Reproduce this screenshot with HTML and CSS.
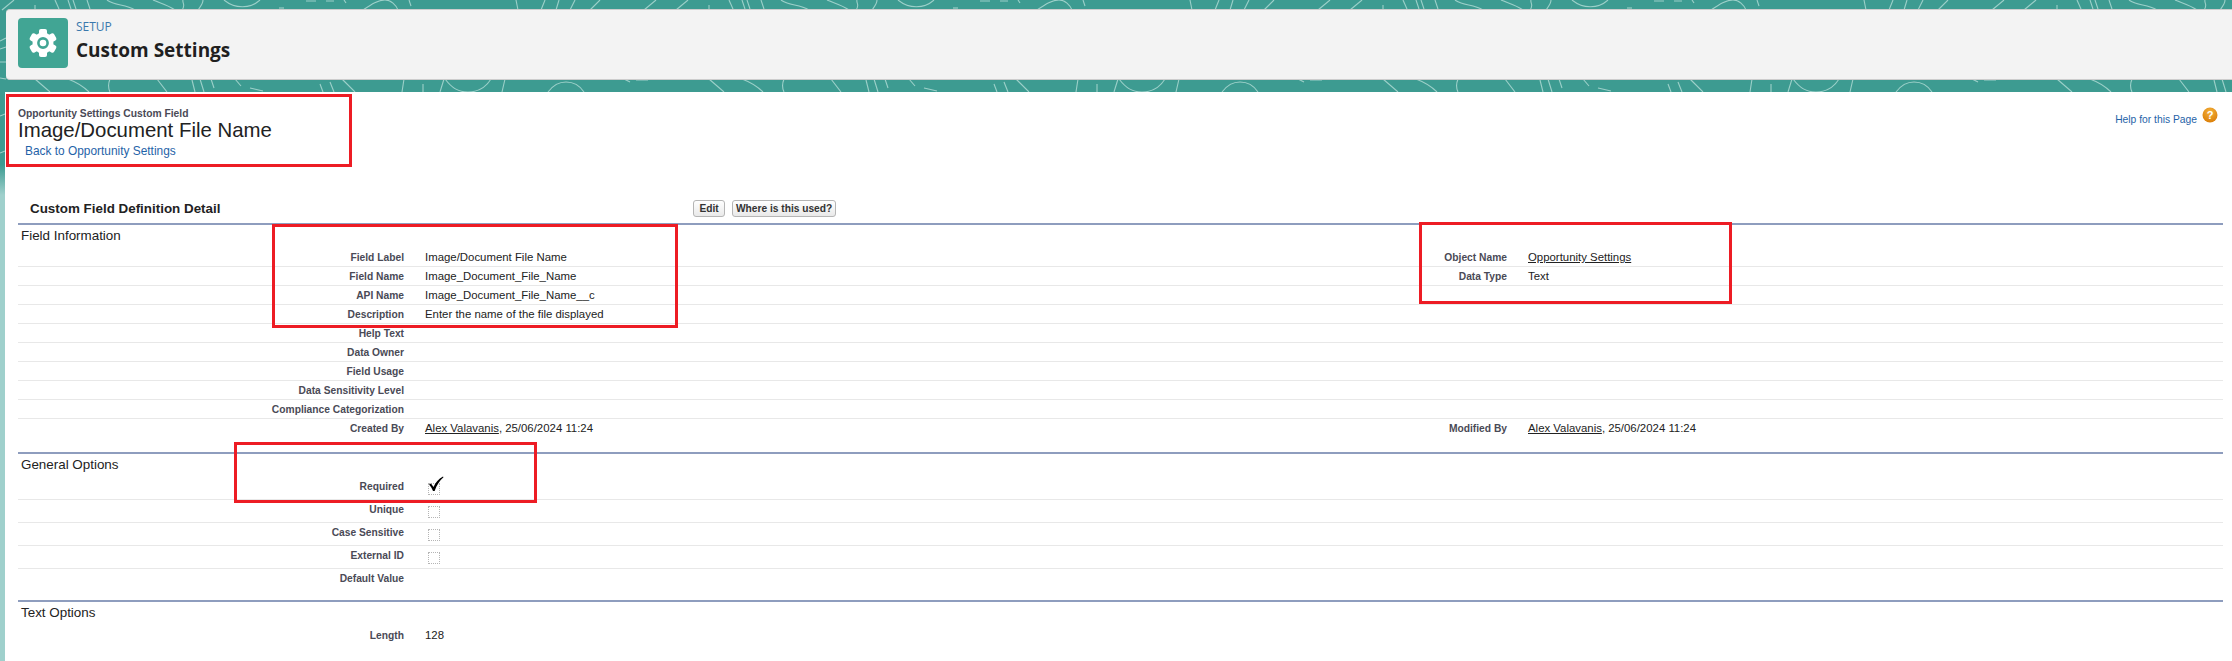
FILE: index.html
```html
<!DOCTYPE html>
<html lang="en">
<head>
<meta charset="utf-8">
<title>Custom Settings</title>
<link rel="stylesheet" href="styles.css">
</head>
<body>
<svg class="backdrop" width="2232" height="170" aria-hidden="true">
  <defs>
    <pattern id="contours" width="674" height="92" patternUnits="userSpaceOnUse" x="0" y="0">
      <g class="contour">
        <path d="M14 0 L2 10"/><path d="M35 5V9"/><path d="M55 0L59 9"/><path d="M68 0L71 9M73 0L76 9M87 0L90 9"/>
        <path d="M107 0C115 6 125 4 135 10"/><path d="M153 0C160 3 168 5 175 10"/><path d="M182 10C186 5 182 3 183 0M203 0C203 4 200 7 198 10"/>
        <path d="M224 0C235 9 250 9 260 0"/><path d="M279 8L284 8"/><path d="M306 1H316M326 1H334M344 0L346 3"/>
        <path d="M363 10C372 4 378 0 385 0C391 0 396 5 398 10"/><path d="M409 0L411 6"/>
        <path d="M516 0L518 10M541 10L545 0M556 10L559 0M570 10L575 0M590 10L600 0M644 10L656 0"/>
        <path d="M35 79L50 92M68 79C76 82 84 87 89 92M110 79C108 84 108 88 110 92M157 79L167 92M192 80L195 92M200 79L204 92M211 79L214 88M235 79L241 86M250 88L263 91"/>
        <path d="M320 84L323 92M330 82L334 92M342 79L355 92M402 92L404 79M423 84V92M445 79C452 88 458 92 468 92C478 92 486 87 491 79M440 92L444 79M502 92L505 79M548 92C554 84 560 82 566 82C574 82 580 86 584 92M624 79L630 82M636 80H648"/>
      </g>
    </pattern>
  </defs>
  <rect class="tile" width="2232" height="92"/>
  <path class="contour" d="M0 41L6 38M0 49L6 47M0 62L6 62M0 116L5 114M0 153L5 151M0 78L6 79"/>
</svg>

<div class="page">
  <header class="setup-bar">
    <div class="setup-icon">
      <svg width="50" height="50" viewBox="0 0 50 50">
        <g class="gear">
          <circle cx="25" cy="25" r="10.5"/>
          <rect x="21" y="11" width="8" height="7" rx="2"/>
          <rect x="21" y="11" width="8" height="7" rx="2" transform="rotate(60 25 25)"/>
          <rect x="21" y="11" width="8" height="7" rx="2" transform="rotate(120 25 25)"/>
          <rect x="21" y="11" width="8" height="7" rx="2" transform="rotate(180 25 25)"/>
          <rect x="21" y="11" width="8" height="7" rx="2" transform="rotate(240 25 25)"/>
          <rect x="21" y="11" width="8" height="7" rx="2" transform="rotate(300 25 25)"/>
        </g>
        <circle class="gear-ring" cx="25" cy="25" r="4.6"/>
      </svg>
    </div>
    <div class="setup-text">
      <div class="setup-eyebrow">SETUP</div>
      <h1 class="setup-title">Custom Settings</h1>
    </div>
  </header>

  <main class="content">
    <div class="page-head">
      <div>
        <div class="page-type">Opportunity Settings Custom Field</div>
        <h2 class="page-name">Image/Document File Name</h2>
        <a class="back-link" href="#">Back to Opportunity Settings</a>
      </div>
      <a class="help" href="#">
        <span>Help for this Page</span>
        <svg class="help-icon" width="16" height="16" viewBox="0 0 16 16">
          <defs>
            <radialGradient id="helpfill" cx="50%" cy="30%" r="75%">
              <stop offset="0" stop-color="#f4b23c"/>
              <stop offset="1" stop-color="#d97b05"/>
            </radialGradient>
          </defs>
          <circle cx="8" cy="8" r="7.5" fill="url(#helpfill)"/>
          <text x="8" y="12" class="help-mark">?</text>
        </svg>
      </a>
    </div>

    <section class="detail">
      <div class="detail-head">
        <h3 class="detail-title">Custom Field Definition Detail</h3>
        <div class="detail-buttons">
          <button class="btn btn-edit" type="button">Edit</button>
          <button class="btn" type="button">Where is this used?</button>
        </div>
      </div>

      <div class="group">
        <h4 class="group-title">Field Information</h4>
        <div class="row"><div class="lbl">Field Label</div><div class="val">Image/Document File Name</div><div class="lbl">Object Name</div><div class="val"><a href="#">Opportunity Settings</a></div></div>
        <div class="row"><div class="lbl">Field Name</div><div class="val">Image_Document_File_Name</div><div class="lbl">Data Type</div><div class="val">Text</div></div>
        <div class="row"><div class="lbl">API Name</div><div class="val">Image_Document_File_Name__c</div><div class="lbl"></div><div class="val"></div></div>
        <div class="row"><div class="lbl">Description</div><div class="val">Enter the name of the file displayed</div><div class="lbl"></div><div class="val"></div></div>
        <div class="row"><div class="lbl">Help Text</div><div class="val"></div><div class="lbl"></div><div class="val"></div></div>
        <div class="row"><div class="lbl">Data Owner</div><div class="val"></div><div class="lbl"></div><div class="val"></div></div>
        <div class="row"><div class="lbl">Field Usage</div><div class="val"></div><div class="lbl"></div><div class="val"></div></div>
        <div class="row"><div class="lbl">Data Sensitivity Level</div><div class="val"></div><div class="lbl"></div><div class="val"></div></div>
        <div class="row"><div class="lbl">Compliance Categorization</div><div class="val"></div><div class="lbl"></div><div class="val"></div></div>
        <div class="row row-last"><div class="lbl">Created By</div><div class="val"><a href="#">Alex Valavanis</a>, 25/06/2024 11:24</div><div class="lbl">Modified By</div><div class="val"><a href="#">Alex Valavanis</a>, 25/06/2024 11:24</div></div>
      </div>

      <div class="group group-options">
        <h4 class="group-title">General Options</h4>
        <div class="row row-tall"><div class="lbl">Required</div><div class="val"><span class="check"><svg class="tick" width="17" height="16" viewBox="0 0 17 16"><path d="M1 8.5L3 7.5L5.5 11C7.5 6.5 10.5 3 15 0.5L15.5 1.2C11.5 4.5 8.8 9 6.6 15H5C4 12.5 2.8 10.2 1 8.5Z"/></svg></span></div><div class="lbl"></div><div class="val"></div></div>
        <div class="row row-tall"><div class="lbl">Unique</div><div class="val"><span class="check"></span></div><div class="lbl"></div><div class="val"></div></div>
        <div class="row row-tall"><div class="lbl">Case Sensitive</div><div class="val"><span class="check"></span></div><div class="lbl"></div><div class="val"></div></div>
        <div class="row row-tall"><div class="lbl">External ID</div><div class="val"><span class="check"></span></div><div class="lbl"></div><div class="val"></div></div>
        <div class="row row-tall row-last"><div class="lbl">Default Value</div><div class="val"></div><div class="lbl"></div><div class="val"></div></div>
      </div>

      <div class="group group-text">
        <h4 class="group-title">Text Options</h4>
        <div class="row row-last"><div class="lbl">Length</div><div class="val">128</div><div class="lbl"></div><div class="val"></div></div>
      </div>
    </section>

    <div class="mark mark-head"></div>
    <div class="mark mark-info"></div>
    <div class="mark mark-object"></div>
    <div class="mark mark-required"></div>
  </main>
</div>
</body>
</html>
```

FILE: styles.css
```css
* { box-sizing: border-box; }

html, body { margin: 0; height: 661px; overflow: hidden; }

body {
  background: linear-gradient(#3d9b91 0, #3d9b91 165px, #9fd0cc 195px);
  font-family: "Liberation Sans", Arial, sans-serif;
  position: relative;
}

.backdrop { position: absolute; top: 0; left: 0; display: block; }
.tile { fill: url(#contours); }
.contour { fill: none; stroke: #9cd0c9; stroke-width: 1.1; }

.page { position: relative; padding-top: 9px; }

/* setup bar */
.setup-bar {
  display: flex;
  align-items: flex-start;
  gap: 8px;
  height: 71px;
  margin-left: 6px;
  padding: 8px 0 0 12px;
  background: #f3f3f3;
  border: 1px solid #cdcdcd;
  border-width: 1px 0;
  border-radius: 4px 0 0 4px;
}
.setup-icon { width: 50px; height: 50px; background: #41a594; border-radius: 4px; }
.setup-icon svg { display: block; }
.gear { fill: #fff; }
.gear-ring { fill: #fff; stroke: #41a594; stroke-width: 2.6; }
.setup-text { margin-top: 1px; font-family: "Open Sans", sans-serif; }
.setup-eyebrow { font-size: 12px; line-height: 16px; color: #3a78ad; }
.setup-title { margin: 2px 0 0; font-size: 19px; line-height: 26px; font-weight: 700; color: #1f1f1f; }

/* content */
.content {
  position: relative;
  margin: 12px 0 0 5px;
  padding: 15px 9px 0 13px;
  height: 569px;
  background: #fff;
}

.page-head { display: flex; justify-content: space-between; height: 89px; }
.page-type { font-size: 10.3px; line-height: 13px; font-weight: 700; color: #4a4a56; }
.page-name { margin: 0; font-size: 20.4px; line-height: 21px; font-weight: 400; color: #222; }
.back-link { display: block; margin: 3px 0 0 7px; font-size: 11.9px; line-height: 14px; color: #1f63a8; text-decoration: none; }
.help { display: flex; align-items: flex-start; gap: 5px; margin-right: 5px; font-size: 10.3px; color: #1f63a8; text-decoration: none; }
.help span { margin-top: 6px; line-height: 13px; }
.help-icon { display: block; }
.help-mark { font: 700 11px "Liberation Sans", sans-serif; fill: #fff; text-anchor: middle; }

.detail-head { display: flex; align-items: center; height: 27px; padding-bottom: 3px; }
.detail-title { margin: 0; width: 675px; padding-left: 12px; font-size: 13.4px; font-weight: 700; color: #222; }
.detail-buttons { display: flex; gap: 7px; }
.btn {
  height: 17px;
  padding: 0 3px;
  background: linear-gradient(#fff, #e9e9e9);
  border: 1px solid #b5b5b5;
  border-radius: 3px;
  font: 700 10.2px "Liberation Sans", sans-serif;
  color: #333;
}
.btn-edit { width: 32px; }

.group { border-top: 2px solid #8e9dbe; }
.group-title { margin: 0; padding-left: 3px; height: 23px; font-size: 13.4px; line-height: 21px; font-weight: 400; color: #222; }
.group-options { margin-top: 14px; }
.group-text { margin-top: 8px; }
.group-text .group-title { height: 24px; }

.row {
  display: grid;
  grid-template-columns: 386px 996px 107px 1fr;
  height: 19px;
  border-bottom: 1px solid #e8e8e8;
  font-size: 11.4px;
  line-height: 19px;
}
.row-tall { height: 23px; }
.row-last { border-bottom: 0; }
.lbl { text-align: right; font-size: 10.25px; font-weight: 700; color: #4a4a56; }
.val { padding-left: 21px; color: #222; }
.val a { color: #222; }

.check {
  position: relative;
  display: block;
  width: 12px;
  height: 12px;
  margin: 6px 0 0 3px;
  border: 1px dotted #b5b5b5;
}
.tick { position: absolute; top: -8px; left: -1px; fill: #000; }

/* review markers drawn over the page */
.mark { position: absolute; border: 3px solid #ed1c24; pointer-events: none; }
.mark-head { left: 1px; top: 2px; width: 346px; height: 73px; }
.mark-info { left: 267px; top: 132px; width: 406px; height: 104px; }
.mark-object { left: 1414px; top: 130px; width: 313px; height: 82px; }
.mark-required { left: 229px; top: 350px; width: 303px; height: 61px; }
```
